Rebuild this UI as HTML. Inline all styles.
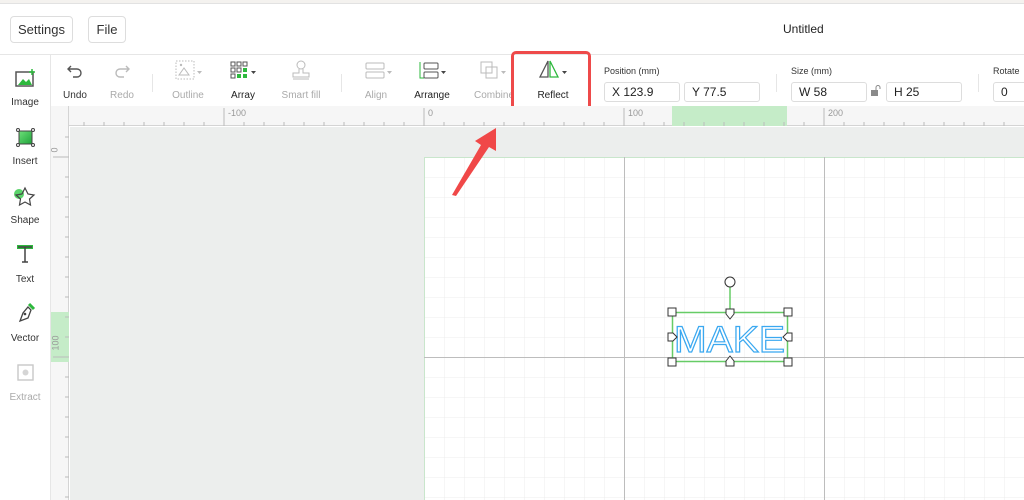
<!DOCTYPE html>
<html><head><meta charset="utf-8"><style>
*{margin:0;padding:0;box-sizing:border-box}
body{width:1024px;height:500px;overflow:hidden;background:#fff;font-family:"Liberation Sans",sans-serif;position:relative;color:#333}
.a{position:absolute}
.btn{position:absolute;top:16px;height:27px;border:1px solid #ddd;border-radius:4px;font-size:13px;line-height:25px;text-align:center;color:#333}
.lab{position:absolute;font-size:10px;text-align:center;width:60px}
.side{position:absolute;left:0;width:50px;font-size:10px;text-align:center;color:#333}
.inp{position:absolute;top:82px;height:20px;border:1px solid #ddd;border-radius:3px;font-size:12px;line-height:18px;padding-left:7px;color:#222}
.hl{font-size:9px;color:#333;position:absolute;top:66px}
.rl{position:absolute;font-size:9px;color:#999}
</style></head><body>
<div class="a" style="left:0;top:0;width:1024px;height:4px;background:#f4f2ef;border-bottom:1px solid #e2e2e2"></div>
<div class="btn" style="left:10px;width:63px">Settings</div>
<div class="btn" style="left:88px;width:38px">File</div>
<div class="a" style="left:783px;top:22px;font-size:12px;color:#222">Untitled</div>
<div class="a" style="left:0;top:54px;width:1024px;height:1px;background:#e6e6e6"></div>
<div class="a" style="left:50px;top:55px;width:1px;height:445px;background:#e6e6e6"></div>

<!-- sidebar -->
<svg class="a" style="left:14px;top:68px" width="24" height="22"><rect x="2" y="4" width="17" height="14" fill="none" stroke="#555" stroke-width="1.5"/><path d="M4 17l5-6 3 3 3-3 3 6z" fill="#2db83d"/><path d="M18 1v6M15 4h6" stroke="#2db83d" stroke-width="1.5"/></svg>
<div class="side" style="top:97px">Image</div>
<svg class="a" style="left:15px;top:127px" width="22" height="22"><defs><linearGradient id="g" x1="0" y1="0" x2="1" y2="1"><stop offset="0" stop-color="#6ee07a"/><stop offset="1" stop-color="#1ea33a"/></linearGradient></defs><rect x="4" y="4" width="13" height="13" fill="url(#g)" stroke="#444"/><g fill="#fff" stroke="#444"><circle cx="3" cy="3" r="1.5"/><circle cx="18" cy="3" r="1.5"/><circle cx="3" cy="18" r="1.5"/><circle cx="18" cy="18" r="1.5"/></g></svg>
<div class="side" style="top:156px">Insert</div>
<svg class="a" style="left:12px;top:185px" width="26" height="24"><circle cx="7" cy="9" r="5" fill="#5ad36a"/><path d="M13 3l3 6 6 1-4.5 4 1 6-5.5-3-5.5 3 1-6L4 10l6-1z" fill="none" stroke="#444" stroke-width="1.2"/></svg>
<div class="side" style="top:215px">Shape</div>
<svg class="a" style="left:15px;top:244px" width="22" height="22"><rect x="2" y="1" width="16" height="4" fill="#2db83d"/><path d="M3 3h14M10 3v15M7 18h6" stroke="#444" stroke-width="1.5" fill="none"/></svg>
<div class="side" style="top:274px">Text</div>
<svg class="a" style="left:15px;top:302px" width="22" height="22"><path d="M14 2l5 5" stroke="#2db83d" stroke-width="3"/><path d="M13 5l3 3-3 8-8 3 3-8z" fill="none" stroke="#444" stroke-width="1.3"/><circle cx="10" cy="12" r="1.3" fill="#444"/></svg>
<div class="side" style="top:333px">Vector</div>
<svg class="a" style="left:15px;top:362px" width="22" height="22" opacity=".4"><rect x="3" y="3" width="15" height="15" fill="none" stroke="#777" stroke-width="1.4"/><circle cx="10.5" cy="10.5" r="3" fill="#999"/></svg>
<div class="side" style="top:392px;color:#aaa">Extract</div>

<!-- toolbar -->
<svg class="a" style="left:65px;top:62px" width="20" height="18"><path d="M6 4L3 7l3 3M3 7h9a4 4 0 010 8H8" fill="none" stroke="#555" stroke-width="1.4"/></svg>
<div class="lab" style="left:45px;top:90px">Undo</div>
<svg class="a" style="left:112px;top:62px" width="20" height="18"><path d="M14 4l3 3-3 3M17 7H8a4 4 0 000 8h4" fill="none" stroke="#bbb" stroke-width="1.4"/></svg>
<div class="lab" style="left:92px;top:90px;color:#aaa">Redo</div>
<div class="a" style="left:152px;top:74px;width:1px;height:18px;background:#e6e6e6"></div>
<svg class="a" style="left:174px;top:60px" width="32" height="22"><rect x="2" y="1" width="18" height="18" fill="none" stroke="#bbb" stroke-dasharray="1.5 1.5"/><path d="M5 15l5-7 5 7z" fill="none" stroke="#bbb"/><circle cx="7" cy="5" r="1.2" fill="#bbb"/><path d="M23 11h5l-2.5 3z" fill="#bbb"/></svg>
<div class="lab" style="left:158px;top:90px;color:#aaa">Outline</div>
<svg class="a" style="left:229px;top:60px" width="32" height="22"><g fill="none" stroke="#555"><rect x="2" y="2" width="4" height="4"/><rect x="8" y="2" width="4" height="4"/><rect x="14" y="2" width="4" height="4"/><rect x="2" y="8" width="4" height="4"/><rect x="8" y="8" width="4" height="4"/><rect x="2" y="14" width="4" height="4"/></g><g fill="#2db83d"><rect x="14" y="8" width="4" height="4"/><rect x="8" y="14" width="4" height="4"/><rect x="14" y="14" width="4" height="4"/></g><path d="M22 11h5l-2.5 3z" fill="#444"/></svg>
<div class="lab" style="left:213px;top:90px;color:#222">Array</div>
<svg class="a" style="left:289px;top:59px" width="24" height="22"><circle cx="12" cy="6" r="4" fill="none" stroke="#bbb"/><path d="M10 10v4h-6v4h16v-4h-6v-4M4 20h16" fill="none" stroke="#bbb"/></svg>
<div class="lab" style="left:271px;top:90px;color:#aaa">Smart fill</div>
<div class="a" style="left:341px;top:74px;width:1px;height:18px;background:#e6e6e6"></div>
<svg class="a" style="left:364px;top:61px" width="32" height="20"><rect x="2" y="2" width="18" height="6" rx="1" fill="none" stroke="#bbb"/><rect x="2" y="11" width="18" height="6" rx="1" fill="none" stroke="#bbb"/><path d="M23 10h5l-2.5 3z" fill="#bbb"/></svg>
<div class="lab" style="left:346px;top:90px;color:#aaa">Align</div>
<svg class="a" style="left:418px;top:61px" width="32" height="20"><path d="M2 1v16h4" fill="none" stroke="#2db83d"/><rect x="6" y="2" width="14" height="6" rx="1" fill="none" stroke="#555"/><rect x="6" y="11" width="14" height="6" rx="1" fill="none" stroke="#555"/><path d="M23 10h5l-2.5 3z" fill="#444"/></svg>
<div class="lab" style="left:402px;top:90px;color:#222">Arrange</div>
<svg class="a" style="left:478px;top:60px" width="32" height="22"><rect x="3" y="2" width="11" height="11" fill="none" stroke="#bbb"/><rect x="8" y="7" width="11" height="11" fill="none" stroke="#bbb"/><path d="M23 11h5l-2.5 3z" fill="#bbb"/></svg>
<div class="lab" style="left:464px;top:90px;color:#aaa">Combine</div>
<svg class="a" style="left:537px;top:59px" width="34" height="22"><path d="M11 2L3 18h8z" fill="none" stroke="#555" stroke-width="1.3"/><path d="M13 2l8 16h-8z" fill="none" stroke="#2db83d" stroke-width="1.3"/><path d="M25 12h5l-2.5 3z" fill="#444"/></svg>
<div class="lab" style="left:523px;top:90px;color:#222">Reflect</div>
<div class="a" style="left:511px;top:51px;width:80px;height:70px;border:3px solid #ee4a4a;border-radius:5px"></div>

<div class="hl" style="left:604px">Position (mm)</div>
<div class="inp" style="left:604px;width:76px">X 123.9</div>
<div class="inp" style="left:684px;width:76px">Y 77.5</div>
<div class="a" style="left:776px;top:74px;width:1px;height:18px;background:#e6e6e6"></div>
<div class="hl" style="left:791px">Size (mm)</div>
<div class="inp" style="left:791px;width:76px">W 58</div>
<svg class="a" style="left:870px;top:85px" width="12" height="12"><rect x="1" y="5" width="7" height="6" fill="#8a8a8a"/><path d="M6 5V2.5a2 2 0 014 0V4" fill="none" stroke="#8a8a8a"/></svg>
<div class="inp" style="left:886px;width:76px">H 25</div>
<div class="a" style="left:978px;top:74px;width:1px;height:18px;background:#e6e6e6"></div>
<div class="hl" style="left:993px">Rotate</div>
<div class="inp" style="left:993px;width:40px">0</div>

<!-- rulers -->
<div class="a" style="left:51px;top:106px;width:973px;height:20px;background:#f6f6f6;border-bottom:1px solid #d4d4d4"></div>
<div class="a" style="left:672px;top:106px;width:115px;height:20px;background:#c5ecc8"></div>
<div class="a" style="left:51px;top:106px;width:18px;height:394px;background:#f6f6f6;border-right:1px solid #d4d4d4"></div>
<div class="a" style="left:51px;top:312px;width:18px;height:50px;background:#c5ecc8"></div>
<svg class="a" style="left:0;top:0" width="1024" height="500">
<g stroke="#bbb" stroke-width="1">
<path d="M84 126v-4M104 126v-4M124 126v-4M144 126v-4M164 126v-4M184 126v-4M204 126v-4M244 126v-4M264 126v-4M284 126v-4M304 126v-4M324 126v-4M344 126v-4M364 126v-4M384 126v-4M404 126v-4M444 126v-4M464 126v-4M484 126v-4M504 126v-4M524 126v-4M544 126v-4M564 126v-4M584 126v-4M604 126v-4M644 126v-4M664 126v-4M684 126v-4M704 126v-4M724 126v-4M744 126v-4M764 126v-4M784 126v-4M804 126v-4M844 126v-4M864 126v-4M884 126v-4M904 126v-4M924 126v-4M944 126v-4M964 126v-4M984 126v-4M1004 126v-4"/>
<path d="M224 126v-18M424 126v-18M624 126v-18M824 126v-18"/>
<path d="M69 137h-4M69 177h-4M69 197h-4M69 217h-4M69 237h-4M69 257h-4M69 277h-4M69 297h-4M69 317h-4M69 337h-4M69 377h-4M69 397h-4M69 417h-4M69 437h-4M69 457h-4M69 477h-4M69 497h-4"/>
<path d="M69 157h-16M69 357h-16"/>
</g>
</svg>
<div class="rl" style="left:228px;top:108px">-100</div>
<div class="rl" style="left:428px;top:108px">0</div>
<div class="rl" style="left:628px;top:108px">100</div>
<div class="rl" style="left:828px;top:108px">200</div>
<div class="rl" style="left:52px;top:145px;transform:rotate(-90deg)">0</div>
<div class="rl" style="left:48px;top:338px;transform:rotate(-90deg)">100</div>

<!-- canvas -->
<div class="a" style="left:70px;top:127px;width:954px;height:373px;background:#eceeed"></div>
<svg class="a" style="left:424px;top:157px" width="600" height="343">
<defs><pattern id="p" width="20" height="20" patternUnits="userSpaceOnUse"><path d="M0 0V20M0 0H20" stroke="#ececec" fill="none"/></pattern></defs>
<rect width="600" height="343" fill="#fff"/>
<rect width="600" height="343" fill="url(#p)"/>
<path d="M0 .5H600M.5 0V343" stroke="#c9e6cc"/>
<path d="M200.5 0V343M400.5 0V343M0 200.5H600" stroke="#bdbdbd"/>
</svg>
<svg class="a" style="left:0;top:0" width="1024" height="500">
<text x="674" y="352" font-family="Liberation Sans" font-size="37" fill="#fff" stroke="#3aa8f0" stroke-width="1.2" textLength="111" lengthAdjust="spacingAndGlyphs">MAKE</text>
<rect x="672.5" y="312.5" width="115" height="49" fill="none" stroke="#66cc66" stroke-width="1.5"/>
<path d="M730 287v25" stroke="#66cc66" stroke-width="1.5"/>
<circle cx="730" cy="282" r="5" fill="#fff" stroke="#333"/>
<g fill="#fff" stroke="#333">
<rect x="668" y="308" width="8" height="8"/><rect x="784" y="308" width="8" height="8"/><rect x="668" y="358" width="8" height="8"/><rect x="784" y="358" width="8" height="8"/>
<path d="M726 309h8v5l-4 5-4-5z"/><path d="M726 366h8v-5l-4-5-4 5z"/>
<path d="M668 333h5l4 4-4 4h-5z"/><path d="M792 333h-5l-4 4 4 4h5z"/>
</g>
<path d="M452 195L481 145l-6-4 21-13 0 23-7-4-33 49z" fill="#f04848"/>
</svg>
</body></html>
